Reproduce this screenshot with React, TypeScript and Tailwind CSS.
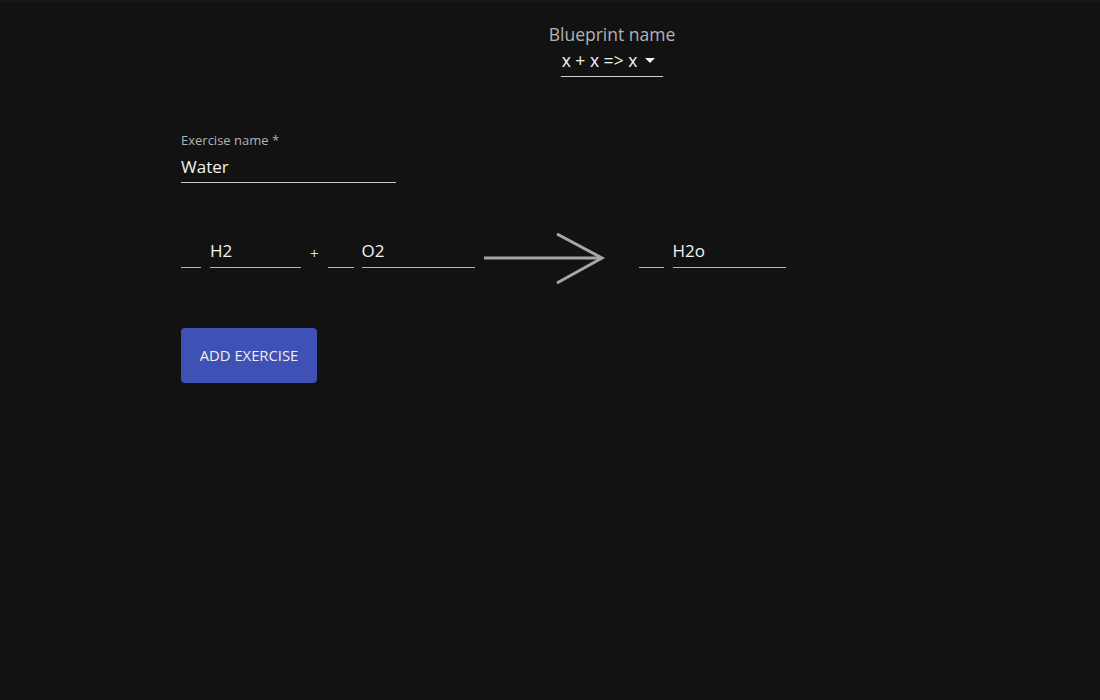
import React from "react"

function Field({ value, width }: { value: string; width: string }) {
    return (
        <div className={`${width} border-b border-[#b5b5b5] h-[28px] flex items-start`}>
            <span className="text-[17px] leading-[22px] text-[#f2f2f2]">{value}</span>
        </div>
    )
}

function Arrow() {
    return (
        <svg width="124" height="54" viewBox="0 0 124 54" className="shrink-0">
            <line x1="0" y1="25" x2="118" y2="25" stroke="#a6a6a6" strokeWidth="3" />
            <polyline points="73,1 118,25 73,50" fill="none" stroke="#a6a6a6" strokeWidth="3" />
        </svg>
    )
}

export default function App() {
    return (
        <div
            className="min-h-[700px] w-full bg-[#121212] text-white"
            style={{ fontFamily: '"Open Sans", "Liberation Sans", sans-serif' }}
        >
            <div className="h-[3px] bg-gradient-to-b from-[#1a1a1a] to-[#121212]" />
            <div className="flex justify-center pl-[124px] pt-[20px]">
                <div className="flex flex-col items-center">
                    <div className="text-[17.5px] leading-[22px] text-[#b3b3b3]">Blueprint name</div>
                    <div className="mt-[3px] flex items-start pt-[1px] gap-[8px] border-b border-[#d0d0d0] pl-[1px] pr-[8px] h-[29px]">
                        <span className="text-[17.5px] leading-[22px] text-[#f2f2f2]">x + x =&gt; x</span>
                        <svg width="10" height="6" viewBox="0 0 10 6" className="mt-[9px]">
                            <path d="M0 0 L10 0 L5 5 Z" fill="#f2f2f2" />
                        </svg>
                    </div>
                </div>
            </div>

            <div className="pl-[181px] pt-[55px]">
                <div className="w-[215px]">
                    <div className="text-[13px] leading-[16px] text-[#b3b3b3]">Exercise name *</div>
                    <div className="mt-[6px] border-b border-[#c8c8c8] h-[29px] pt-[1px]">
                        <span className="text-[17px] leading-[22px] text-[#f2f2f2]">Water</span>
                    </div>
                </div>

                <div className="mt-[49px] flex items-start h-[54px]">
                    <div className="flex items-end gap-[9px] pt-[8px]">
                        <Field value="" width="w-[20px]" />
                        <Field value="H2" width="w-[91px]" />
                    </div>
                    <span className="ml-[9px] text-[15px] text-[#e0e0e0] pt-[10px]">+</span>
                    <div className="ml-[9px] flex items-end gap-[8px] pt-[8px]">
                        <Field value="" width="w-[26px]" />
                        <Field value="O2" width="w-[113px]" />
                    </div>
                    <div className="ml-[9px] pt-[1px]">
                        <Arrow />
                    </div>
                    <div className="ml-[31px] flex items-end gap-[9px] pt-[8px]">
                        <Field value="" width="w-[25px]" />
                        <Field value="H2o" width="w-[113px]" />
                    </div>
                </div>

                <button className="mt-[42px] w-[136px] h-[55px] rounded-[4px] bg-[#3f51b5] text-[14.8px] uppercase text-[#f0f0f0]">
                    Add Exercise
                </button>
            </div>
        </div>
    )
}
